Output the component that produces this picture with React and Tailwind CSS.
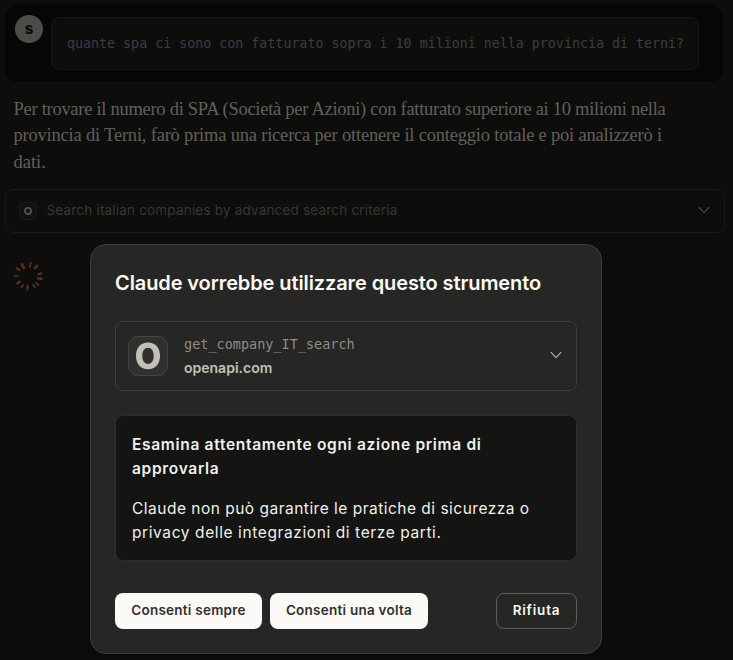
const SPOKES = [
  [22, 265.5, 24, 269, 3.2], [30.7, 264, 29.8, 268, 2.2], [37.2, 266.8, 35, 269.2, 3.2],
  [41.4, 274.4, 38.6, 275.1, 2.6], [41.6, 279.8, 38.2, 279.4, 3], [38.6, 286.4, 36, 283.6, 2.2],
  [35, 288.2, 33.2, 286, 2.4], [27.4, 290.3, 27.7, 286.6, 2.4], [21.4, 288.5, 23.2, 286, 2.4],
  [17.4, 284.4, 19.8, 282.8, 3], [14.6, 276.9, 17.6, 277, 2.2], [16.8, 269.2, 19.2, 271, 3],
];

function Chevron({ className }) {
  return (
    <svg className={`relative -top-px ${className}`} width="12" height="8" viewBox="0 0 12 8" fill="none" stroke="currentColor" strokeWidth="1.15" strokeLinecap="round" strokeLinejoin="round">
      <path d="M1.1 1.4 6 6.6 10.9 1.4" />
    </svg>
  );
}

function Spinner() {
  return (
    <svg className="mt-[27px] ml-[7px] text-[#562e20]" width="32" height="32" viewBox="12 261 32 32" stroke="currentColor" strokeLinecap="round">
      {SPOKES.map(([x1, y1, x2, y2, w], i) => (
        <line key={i} x1={x1} y1={y1} x2={x2} y2={y2} strokeWidth={w * 0.85} />
      ))}
    </svg>
  );
}

function Conversation() {
  return (
    <div className="px-[5px] pt-[5px]">
      <div className="flex h-[77px] w-[718px] gap-2 rounded-xl bg-[#060606] pl-[10px]">
        <div className="mt-[10px] flex size-7 shrink-0 items-center justify-center rounded-full bg-[#4e4c47] text-[15px] font-extrabold text-[#0d0d0c]">s</div>
        <div className="mt-3 flex h-[53px] w-[648px] items-center whitespace-nowrap rounded-lg border border-[#171716] bg-[#0d0d0b] pl-[15px] font-['DejaVu_Sans_Mono',monospace] text-[13.33px] tracking-[-0.01px] text-[#3b3e44]">
          quante spa ci sono con fatturato sopra i 10 milioni nella provincia di terni?
        </div>
      </div>
      <div className="mt-[14px] whitespace-nowrap pl-[8.5px] font-['Liberation_Serif',serif] text-[18.5px] leading-[26.4px] text-[#61605c]">
        <p className="tracking-[-0.28px]">Per trovare il numero di SPA (Società per Azioni) con fatturato superiore ai 10 milioni nella</p>
        <p className="tracking-[-0.2px]">provincia di Terni, farò prima una ricerca per ottenere il conteggio totale e poi analizzerò i</p>
        <p>dati.</p>
      </div>
      <div className="mt-[14px] flex h-11 w-[720px] items-center rounded-lg border border-[#1a1a18] pr-[14px] pl-[13px]">
        <div className="flex size-[18px] items-center justify-center rounded border border-[#1b1b1a] bg-[#111110]">
          <svg width="8" height="8" viewBox="0 0 8 8" fill="none" stroke="#53514d">
            <ellipse cx="4" cy="4" rx="3" ry="3.1" strokeWidth="1.9" />
          </svg>
        </div>
        <span className="ml-[9.5px] pb-[2px] text-[13.5px] tracking-[0.19px] text-[#373735]">Search italian companies by advanced search criteria</span>
        <Chevron className="ml-auto text-[#4a4a46]" />
      </div>
      <Spinner />
    </div>
  );
}

function PermissionDialog() {
  return (
    <div className="flex h-[410px] w-[512px] flex-col rounded-2xl border border-[#3d3d3b] bg-[#262624] px-6 pt-6 shadow-xl">
      <h2 className="whitespace-nowrap text-[20px] leading-7 font-semibold tracking-[-0.1px] text-[#faf9f5]">Claude vorrebbe utilizzare questo strumento</h2>
      <div className="mt-6 flex h-[70px] items-center rounded-lg border border-[#3e3e3b] pr-[14px] pl-3">
        <div className="flex size-10 items-center justify-center rounded-[10px] border border-[#454542] bg-[#30302e]">
          <svg width="24" height="28" viewBox="0 0 24 28" fill="#c2c0b6">
            <path fillRule="evenodd" d="M12 .4C19.200 .4 24 5.300 24 13.800S19.200 27.200 12 27.200 0 22.300 0 13.800 4.800 .4 12 .4ZM12 5.700C8.600 5.700 6.300 8.800 6.300 13.800S8.600 21.900 12 21.900 17.700 18.800 17.700 13.800 15.400 5.700 12 5.700Z" />
          </svg>
        </div>
        <div className="ml-4 whitespace-nowrap leading-6">
          <div className="font-['DejaVu_Sans_Mono',monospace] text-[13.5px] text-[#8e8c84]">get_company_IT_search</div>
          <div className="text-[14px] font-semibold text-[#c2c0b6]">openapi.com</div>
        </div>
        <Chevron className="ml-auto text-[#b5b3a9]" />
      </div>
      <div className="mt-6 h-[146px] whitespace-nowrap rounded-lg border border-[#2e2e2c] bg-[#141413] px-4 pt-[17px] text-[15.5px] leading-6 text-[#f0efea]">
        <p className="font-semibold tracking-[0.69px]">Esamina attentamente ogni azione prima di<br />approvarla</p>
        <p className="mt-4 tracking-[0.49px]">Claude non può garantire le pratiche di sicurezza o<br /><span className="tracking-[0.6px]">privacy delle integrazioni di terze parti.</span></p>
      </div>
      <div className="mt-8 flex gap-2 whitespace-nowrap text-[13.5px] font-semibold">
        <button className="h-9 w-[147px] rounded-lg bg-[#faf9f5] pb-[2px] tracking-[0.25px] text-[#30302e]">Consenti sempre</button>
        <button className="h-9 w-[158px] rounded-lg bg-[#faf9f5] pb-[2px] tracking-[0.25px] text-[#30302e]">Consenti una volta</button>
        <button className="ml-auto h-9 w-[81px] rounded-lg border border-[#5b5b58] pb-[2px] tracking-[0.8px] text-[#faf9f5]">Rifiuta</button>
      </div>
    </div>
  );
}

export default function App() {
  return (
    <main className="relative h-[660px] w-[733px] overflow-hidden bg-[#0d0d0b] font-[Inter,sans-serif]">
      <Conversation />
      <div className="absolute inset-0 flex items-start pt-[244px] pl-[90px]">
        <PermissionDialog />
      </div>
    </main>
  );
}
